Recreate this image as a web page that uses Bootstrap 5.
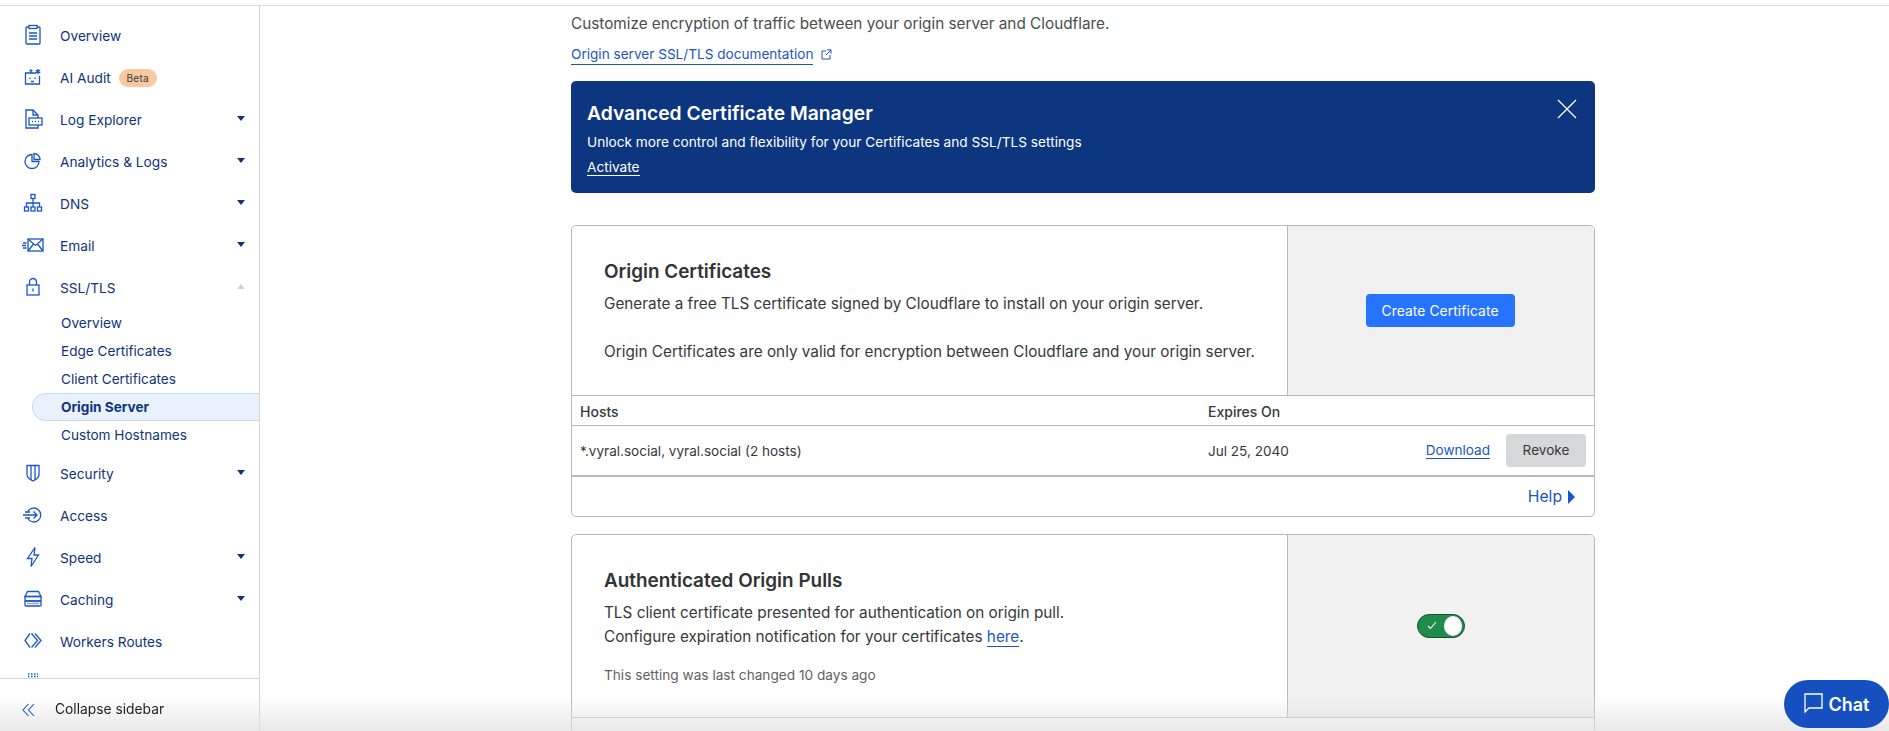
<!DOCTYPE html>
<html lang="en">
<head>
<meta charset="utf-8">
<title>SSL/TLS Origin Server</title>
<link href="https://cdn.jsdelivr.net/npm/bootstrap@5.3.0/dist/css/bootstrap.min.css" rel="stylesheet">
<style>
html,body{height:731px;overflow:hidden;background:#fff;font-family:Inter,"Noto Sans",sans-serif;color:#36393a}
.topstrip{height:6px;border-bottom:1px solid #dcdcdc}
.shell{height:725px}
.sidebar{width:260px;flex:0 0 260px;border-right:1px solid #d5d5d5;height:725px}
.sidenav{padding-top:9px;overflow:hidden;min-height:0;color:#0e347d;font-size:13.7px}
.sideitem{height:42px;padding-left:60px;padding-right:14px;position:relative;color:#0e347d;text-decoration:none}
.sideicon{position:absolute;left:22px;top:9px;width:22px;height:22px;fill:none;stroke:#1a56c4;stroke-width:1.3}
.subitem{height:28px;padding-left:61px;color:#0e347d;text-decoration:none;font-size:13.6px}
.subgroup{margin-bottom:4px}
.subactive{margin-left:32px;padding-left:28px;background:#e9f1fd;border:1px solid #c6daf6;border-right:0;border-radius:14px 0 0 14px;font-weight:700}
.caretdown,.caretup{width:0;height:0;border-left:4px solid transparent;border-right:4px solid transparent;margin-top:-3px}
.caretdown{border-top:5px solid #0e347d}
.caretup{border-bottom:5px solid #d2d2d2}
.betatag{background:#f8c9a0;color:#36393a;font-size:10px;letter-spacing:.3px;border-radius:9px;height:18px;width:38px;margin-left:8px}
.sidefoot{height:53px;border-top:1px solid #d5d5d5;padding-left:22px;padding-top:9px;font-size:13.8px;color:#1d1f20;gap:20px;flex:0 0 53px;background:#fff}
.sidefoot > *{position:relative;z-index:5}
.mainpane{padding-left:311px;width:1335px;font-size:15px}
.introtext{padding-top:6px;font-size:15.3px;line-height:24px;color:#4a4d4e}
.doclink{font-size:13.6px;line-height:20px;margin-top:8px;height:20px}
.doclink a,.herelink,.dllink{color:#1a56c4;text-decoration:none;border-bottom:1px solid #1a56c4}
.promo{height:112px;margin-top:17px;background:#0d3680;color:#fff;border-radius:5px;padding:20px 16px 0;position:relative}
.promotitle{font-size:19.3px;font-weight:600;line-height:24px;margin:0}
.promotext{font-size:13.67px;line-height:20px;margin:7px 0 0}
.promolink{font-size:13.67px;line-height:20px;margin-top:5px;height:20px}
.promolink a{color:#fff;text-decoration:none;border-bottom:1px solid #fff}
.promoclose{position:absolute;right:18px;top:16px;width:20px;height:20px;padding:0;background:none;border:0}
.setcard{border:1px solid #b9b9b9;border-radius:5px;overflow:hidden}
.setcard + .setcard{margin-top:17px}
.certcard{margin-top:32px}
.setbody{padding:33px 26px 31px 32px;width:715px;flex:0 0 715px}
.settitle{font-size:18.9px;font-weight:600;line-height:26px;margin:0 0 7px;color:#313435}
.setdesc{font-size:15.3px;line-height:24px;margin:0;color:#36393a}
.setaside{background:#f1f1f1;border-left:1px solid #b9b9b9}
.createbtn{background:#2673ff;border:0;border-radius:4px;color:#fff;font-size:13.8px;width:149px;height:33px;padding:2px 0 0;margin:0 2px 0 0;letter-spacing:.1px}
.hoststbl{margin:0;font-size:13.55px;color:#36393a;table-layout:fixed}
.hoststbl th,.hoststbl td{padding:0 0 0 8px;border-color:#b9b9b9;vertical-align:middle;color:#36393a}
.hoststbl thead tr{height:30px;border-top:1px solid #b9b9b9}
.hoststbl th{font-weight:500;font-size:14px;padding-top:2px}
.hoststbl tbody tr{height:50px}
.hoststbl tbody td{border-bottom:2px solid #b9b9b9}
.hoststbl tbody td > span{position:relative;top:1px}
.hostcol{width:628px}
.revokebtn{background:#d6d7d8;border:0;border-radius:4px;color:#36393a;font-size:13.6px;width:80px;height:33px;padding:0;margin:0 8px 0 16px}
.helprow{height:39px;padding:2px 19px 0 0;color:#1a56c4;font-size:15.7px;gap:6px}
.helpcaret{width:0;height:0;border-top:7px solid transparent;border-bottom:7px solid transparent;border-left:7px solid #1a56c4}
.lastchange{font-size:13.65px;line-height:20px;margin:16px 0 1px;color:#5f6264}
.herelink{color:#1a56c4}
.nextrow{height:60px;border-top:1px solid #b9b9b9}
.toggler{width:48px;height:24px;background:#218b4b;border:1px solid #1f4d32;border-radius:12px;padding:0 2px 0 9px}
.toggleknob{width:18px;height:20px;background:#fff;border-radius:50%}
.chatbtn{position:fixed;left:1784px;top:680px;width:105px;height:48px;border:0;border-radius:24px;background:#1650c0;color:#fff;font-size:18px;font-weight:600;gap:6px;padding:0;z-index:5}
.bottomshade{position:fixed;left:0;right:0;top:696px;height:35px;background:linear-gradient(to bottom,rgba(225,225,225,0),rgba(225,225,225,.75));pointer-events:none;z-index:4}
</style>
</head>
<body>
<div class="topstrip"></div>
<div class="shell d-flex">
  <aside class="sidebar d-flex flex-column">
    <nav class="sidenav flex-grow-1">
      <a class="sideitem d-flex align-items-center" href="#"><svg class="sideicon" viewBox="0 0 22 22"><rect x="4" y="3" width="14" height="17" rx="1"/><rect x="7" y="1.500" width="8" height="3" fill="#fff"/><path d="M7 9h8M7 12h8M7 15h8"/></svg>Overview</a>
      <a class="sideitem d-flex align-items-center" href="#"><svg class="sideicon" viewBox="0 0 22 22"><path d="M14 7H3.500v11h14v-8"/><path d="M9 7V3.500M7.500 4.500h3M8 11.500v1.500M13 11.500v1.500M9 15.500h3M16 3v5M13.800 4.200l4.400 2.600M18.200 4.200l-4.400 2.600"/></svg>AI Audit<span class="betatag d-inline-flex align-items-center justify-content-center">Beta</span></a>
      <a class="sideitem d-flex align-items-center" href="#"><svg class="sideicon" viewBox="0 0 22 22"><path d="M16 10V7l-5-5H4v18h12v-3"/><path d="M11 2v5h5"/><rect x="7" y="10" width="13" height="7"/><path d="M10 13.500h1M13 13.500h1M16 13.500h1" stroke-dasharray="1 .5"/></svg>Log Explorer<span class="caretdown ms-auto"></span></a>
      <a class="sideitem d-flex align-items-center" href="#"><svg class="sideicon" viewBox="0 0 22 22"><path d="M10 4.500a7 7 0 1 0 7 7h-7z"/><path d="M12 3.500a6 6 0 0 1 6 6h-6z"/></svg>Analytics &amp; Logs<span class="caretdown ms-auto"></span></a>
      <a class="sideitem d-flex align-items-center" href="#"><svg class="sideicon" viewBox="0 0 22 22"><rect x="9" y="2.500" width="4" height="4"/><rect x="2.500" y="15" width="4" height="4"/><rect x="9" y="15" width="4" height="4"/><rect x="15.500" y="15" width="4" height="4"/><path d="M11 6.500V15M4.500 15v-4h13v4"/></svg>DNS<span class="caretdown ms-auto"></span></a>
      <a class="sideitem d-flex align-items-center" href="#"><svg class="sideicon" viewBox="0 0 22 22"><rect x="6" y="5" width="15" height="12"/><path d="M6 5l7.500 6.500L21 5M6 17l5.500-7M21 17l-5.500-7M1 9h3.500M0 11.500h4M1 14h3.500"/></svg>Email<span class="caretdown ms-auto"></span></a>
      <a class="sideitem d-flex align-items-center" href="#"><svg class="sideicon" viewBox="0 0 22 22"><rect x="5" y="9" width="12" height="10"/><path d="M7.500 9V6a3.500 3.500 0 0 1 7 0v3M11 12.500v3"/></svg>SSL/TLS<span class="caretup ms-auto"></span></a>
      <div class="subgroup">
        <a class="subitem d-flex align-items-center" href="#">Overview</a>
        <a class="subitem d-flex align-items-center" href="#">Edge Certificates</a>
        <a class="subitem d-flex align-items-center" href="#">Client Certificates</a>
        <a class="subitem subactive d-flex align-items-center" href="#">Origin Server</a>
        <a class="subitem d-flex align-items-center" href="#">Custom Hostnames</a>
      </div>
      <a class="sideitem d-flex align-items-center" href="#"><svg class="sideicon" viewBox="0 0 22 22"><path d="M5 3.500h12v9c0 3-3 5-6 6.500-3-1.500-6-3.500-6-6.500z"/><path d="M9 3.500V18M13 3.500V18"/></svg>Security<span class="caretdown ms-auto"></span></a>
      <a class="sideitem d-flex align-items-center" href="#"><svg class="sideicon" viewBox="0 0 22 22"><path d="M6 7a7 7 0 1 1 0 8M1 11h14M11.500 7.500l3.500 3.500-3.500 3.500M3 8h5M3 14h5"/></svg>Access</a>
      <a class="sideitem d-flex align-items-center" href="#"><svg class="sideicon" viewBox="0 0 22 22"><path d="M13 1.500L5.500 12.500h4.500L9 20.500 16.500 9H12z"/></svg>Speed<span class="caretdown ms-auto"></span></a>
      <a class="sideitem d-flex align-items-center" href="#"><svg class="sideicon" viewBox="0 0 22 22"><path d="M3 8.500L5.500 3.500h11L19 8.500z"/><rect x="3" y="8.500" width="16" height="4.500"/><rect x="3" y="13" width="16" height="5" rx="1"/><path d="M5.500 15.500h11" stroke-dasharray="1 1"/></svg>Caching<span class="caretdown ms-auto"></span></a>
      <a class="sideitem d-flex align-items-center" href="#"><svg class="sideicon" viewBox="0 0 22 22"><path d="M8 3.500L3 10.500l5 7M13 3.500l6 7-6 7M9.500 3.500l6 7-6 7"/></svg>Workers Routes</a>
      <a class="sideitem d-flex align-items-center" href="#"><svg class="sideicon" viewBox="0 0 22 22"><path d="M6 2h10M6 4.500h10" stroke-dasharray="1.500 1.500"/></svg></a>
    </nav>
    <div class="sidefoot d-flex align-items-center">
      <svg width="13" height="14" viewBox="0 0 13 14" fill="none" stroke="#1a56c4" stroke-width="1.100"><path d="M6.500 1L1 7l5.500 6M12 1L6.500 7l5.500 6"/></svg>
      <span>Collapse sidebar</span>
    </div>
  </aside>
  <main class="mainpane">
    <p class="introtext m-0">Customize encryption of traffic between your origin server and Cloudflare.</p>
    <div class="doclink d-flex align-items-center"><a href="#">Origin server SSL/TLS documentation</a>
      <svg class="ms-2" width="11" height="11" viewBox="0 0 11 11" fill="none" stroke="#1a56c4"><path d="M5 2H1v8h8V6M6 .8h4v4M10 1L5 6"/></svg></div>
    <section class="promo">
      <h2 class="promotitle">Advanced Certificate Manager</h2>
      <p class="promotext">Unlock more control and flexibility for your Certificates and SSL/TLS settings</p>
      <div class="promolink"><a href="#">Activate</a></div>
      <button class="promoclose" type="button" aria-label="Close"><svg width="20" height="20" viewBox="0 0 20 20" stroke="#fff" stroke-width="1.300"><path d="M1 1l18 18M19 1L1 19"/></svg></button>
    </section>
    <section class="setcard certcard">
      <div class="d-flex">
        <div class="setbody">
          <h3 class="settitle">Origin Certificates</h3>
          <p class="setdesc">Generate a free TLS certificate signed by Cloudflare to install on your origin server.<br><br>Origin Certificates are only valid for encryption between Cloudflare and your origin server.</p>
        </div>
        <div class="setaside flex-grow-1 d-flex align-items-center justify-content-center"><button class="createbtn" type="button">Create Certificate</button></div>
      </div>
      <table class="table hoststbl">
        <thead><tr><th class="hostcol">Hosts</th><th>Expires On</th><th></th></tr></thead>
        <tbody><tr><td><span>*.vyral.social, vyral.social (2 hosts)</span></td><td><span>Jul 25, 2040</span></td><td class="text-end"><a class="dllink" href="#">Download</a><button class="revokebtn" type="button">Revoke</button></td></tr></tbody>
      </table>
      <div class="helprow d-flex align-items-center justify-content-end"><span>Help</span><span class="helpcaret"></span></div>
    </section>
    <section class="setcard">
      <div class="d-flex">
        <div class="setbody">
          <h3 class="settitle">Authenticated Origin Pulls</h3>
          <p class="setdesc">TLS client certificate presented for authentication on origin pull.<br>Configure expiration notification for your certificates <a class="herelink" href="#">here</a>.</p>
          <p class="lastchange">This setting was last changed 10 days ago</p>
        </div>
        <div class="setaside flex-grow-1 d-flex align-items-center justify-content-center">
          <div class="toggler d-flex align-items-center justify-content-between"><svg width="10" height="9" viewBox="0 0 10 9" fill="none" stroke="#fff" stroke-width="1.100"><path d="M1 5l2.500 2.500L9 1"/></svg><span class="toggleknob"></span></div>
        </div>
      </div>
      <div class="nextrow"></div>
    </section>
  </main>
</div>
<div class="bottomshade"></div>
<button class="chatbtn d-flex align-items-center justify-content-center" type="button"><svg width="19" height="25" viewBox="0 0 19 25" fill="none" stroke="#fff" stroke-width="1.300"><path d="M1 20V2h17v14H5z"/></svg>Chat</button>
<script src="https://cdn.jsdelivr.net/npm/bootstrap@5.3.0/dist/js/bootstrap.bundle.min.js"></script>
</body>
</html>
